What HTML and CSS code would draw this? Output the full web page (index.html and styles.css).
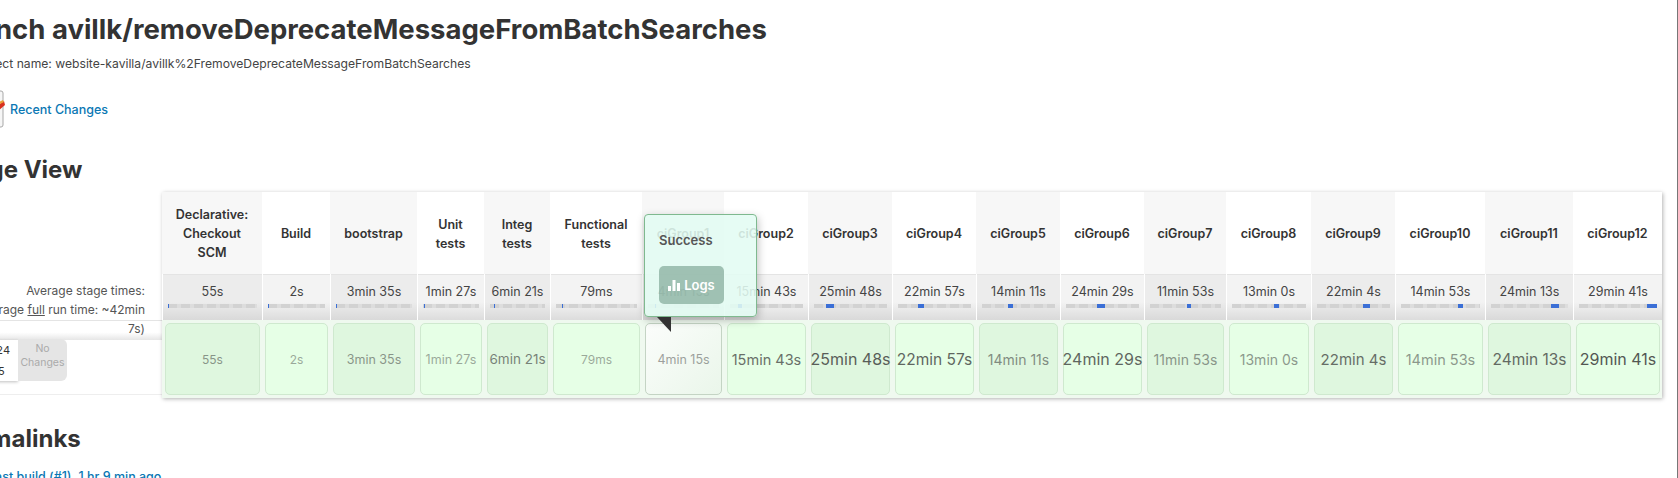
FILE: index.html
```html
<!DOCTYPE html>
<html lang="en">
<head>
    <meta charset="UTF-8">
    <title>Branch avillk/removeDeprecateMessageFromBatchSearches</title>
    <link rel="stylesheet" href="styles.css">
</head>
<body>
    <div class="page">
        <h1>Branch avillk/removeDeprecateMessageFromBatchSearches</h1>
        <p class="project-name">Full project name: website-kavilla/avillk%2FremoveDeprecateMessageFromBatchSearches</p>

        <div class="changes-row">
            <svg class="changes-icon" width="32" height="38" viewBox="0 0 32 38">
                <rect x="2" y="1" width="28" height="36" rx="2" fill="#f6f6f6" stroke="#a8a8a8"/>
                <path d="M7 8h18M7 14h18M7 20h18" stroke="#c8c8c8"/>
                <path d="M25 15l6-4 1 4-6 5z" fill="#d9301f"/>
                <path d="M26 12l4-2 1 2-4 2z" fill="#e9a23b"/>
            </svg>
            <a class="link" href="#">Recent Changes</a>
        </div>

        <h2 class="stage-title">Stage View</h2>

        <div class="stage-view">
            <div class="left-col">
                <div class="avg-label">
                    Average stage times:<br>
                    (Average <u>full</u> run time: ~42min 7s)
                </div>
                <div class="build-band"></div>
                <div class="build-row">
                    <div class="build-date">
                        <span>Jun 24</span>
                        <span>12:15</span>
                    </div>
                    <div class="no-changes">No Changes</div>
                </div>
            </div>

            <div class="stage-table">
                <div class="stage odd">
                    <div class="stage-head">Declarative: Checkout SCM</div>
                    <div class="stage-avg">55s<div class="track"><div class="bar" style="left:0;width:1%"></div></div></div>
                    <div class="stage-body"><div class="cell"><span style="font-size:12px;opacity:.5">55s</span></div></div>
                </div>
                <div class="stage">
                    <div class="stage-head">Build</div>
                    <div class="stage-avg">2s<div class="track"><div class="bar" style="left:0;width:1%"></div></div></div>
                    <div class="stage-body"><div class="cell"><span style="font-size:12px;opacity:.42">2s</span></div></div>
                </div>
                <div class="stage odd">
                    <div class="stage-head">bootstrap</div>
                    <div class="stage-avg">3min 35s<div class="track"><div class="bar" style="left:0;width:1%"></div></div></div>
                    <div class="stage-body"><div class="cell"><span style="font-size:12.5px;opacity:.5">3min 35s</span></div></div>
                </div>
                <div class="stage">
                    <div class="stage-head">Unit tests</div>
                    <div class="stage-avg">1min 27s<div class="track"><div class="bar" style="left:1%;width:1.5%"></div></div></div>
                    <div class="stage-body"><div class="cell"><span style="font-size:12.5px;opacity:.42">1min 27s</span></div></div>
                </div>
                <div class="stage odd">
                    <div class="stage-head">Integ tests</div>
                    <div class="stage-avg">6min 21s<div class="track"><div class="bar" style="left:7%;width:1.5%"></div></div></div>
                    <div class="stage-body"><div class="cell"><span style="font-size:13.5px;opacity:.6">6min 21s</span></div></div>
                </div>
                <div class="stage">
                    <div class="stage-head">Functional tests</div>
                    <div class="stage-avg">79ms<div class="track"><div class="bar" style="left:7.5%;width:1%"></div></div></div>
                    <div class="stage-body"><div class="cell"><span style="font-size:12px;opacity:.42">79ms</span></div></div>
                </div>
                <div class="stage odd hovered">
                    <div class="stage-head">ciGroup1</div>
                    <div class="stage-avg">4min 15s<div class="track"><div class="bar" style="left:10%;width:1%"></div></div></div>
                    <div class="stage-body"><div class="cell"><span style="font-size:12.5px;opacity:.45">4min 15s</span></div></div>
                </div>
                <div class="stage">
                    <div class="stage-head">ciGroup2</div>
                    <div class="stage-avg">15min 43s<div class="track"><div class="bar" style="left:11%;width:6%"></div></div></div>
                    <div class="stage-body"><div class="cell"><span style="font-size:14.5px;opacity:.7">15min 43s</span></div></div>
                </div>
                <div class="stage odd">
                    <div class="stage-head">ciGroup3</div>
                    <div class="stage-avg">25min 48s<div class="track"><div class="bar" style="left:17%;width:11%"></div></div></div>
                    <div class="stage-body"><div class="cell"><span style="font-size:16px;opacity:.78">25min 48s</span></div></div>
                </div>
                <div class="stage">
                    <div class="stage-head">ciGroup4</div>
                    <div class="stage-avg">22min 57s<div class="track"><div class="bar" style="left:28%;width:8%"></div></div></div>
                    <div class="stage-body"><div class="cell"><span style="font-size:15.5px;opacity:.75">22min 57s</span></div></div>
                </div>
                <div class="stage odd">
                    <div class="stage-head">ciGroup5</div>
                    <div class="stage-avg">14min 11s<div class="track"><div class="bar" style="left:36%;width:7%"></div></div></div>
                    <div class="stage-body"><div class="cell"><span style="font-size:14px;opacity:.55">14min 11s</span></div></div>
                </div>
                <div class="stage">
                    <div class="stage-head">ciGroup6</div>
                    <div class="stage-avg">24min 29s<div class="track"><div class="bar" style="left:43%;width:10%"></div></div></div>
                    <div class="stage-body"><div class="cell"><span style="font-size:16px;opacity:.75">24min 29s</span></div></div>
                </div>
                <div class="stage odd">
                    <div class="stage-head">ciGroup7</div>
                    <div class="stage-avg">11min 53s<div class="track"><div class="bar" style="left:52%;width:6%"></div></div></div>
                    <div class="stage-body"><div class="cell"><span style="font-size:14px;opacity:.5">11min 53s</span></div></div>
                </div>
                <div class="stage">
                    <div class="stage-head">ciGroup8</div>
                    <div class="stage-avg">13min 0s<div class="track"><div class="bar" style="left:57%;width:6%"></div></div></div>
                    <div class="stage-body"><div class="cell"><span style="font-size:14px;opacity:.5">13min 0s</span></div></div>
                </div>
                <div class="stage odd">
                    <div class="stage-head">ciGroup9</div>
                    <div class="stage-avg">22min 4s<div class="track"><div class="bar" style="left:62.5%;width:10%"></div></div></div>
                    <div class="stage-body"><div class="cell"><span style="font-size:15px;opacity:.7">22min 4s</span></div></div>
                </div>
                <div class="stage">
                    <div class="stage-head">ciGroup10</div>
                    <div class="stage-avg">14min 53s<div class="track"><div class="bar" style="left:72%;width:6%"></div></div></div>
                    <div class="stage-body"><div class="cell"><span style="font-size:14.5px;opacity:.5">14min 53s</span></div></div>
                </div>
                <div class="stage odd">
                    <div class="stage-head">ciGroup11</div>
                    <div class="stage-avg">24min 13s<div class="track"><div class="bar" style="left:78%;width:10.5%"></div></div></div>
                    <div class="stage-body"><div class="cell"><span style="font-size:15.5px;opacity:.72">24min 13s</span></div></div>
                </div>
                <div class="stage">
                    <div class="stage-head">ciGroup12</div>
                    <div class="stage-avg">29min 41s<div class="track"><div class="bar" style="left:87%;width:13%"></div></div></div>
                    <div class="stage-body"><div class="cell"><span style="font-size:16px;opacity:.82">29min 41s</span></div></div>
                </div>

                <div class="popover">
                    <div class="popover-title">Success</div>
                    <div class="logs-btn">
                        <svg width="12" height="12" viewBox="0 0 12 12"><path d="M0 7h3v5H0zM4.5 1h3v11h-3zM9 4h3v8H9z" fill="#fff"/></svg>
                        Logs
                    </div>
                    <div class="popover-arrow"></div>
                </div>
            </div>
        </div>

        <h2 class="permalinks-title">Permalinks</h2>
        <a class="link last-build" href="#">Last build (#1), 1 hr 9 min ago</a>
    </div>
</body>
</html>
```

FILE: styles.css
```css
html, body {
    margin: 0;
    height: 478px;
    overflow: hidden;
    background: #fff;
}
body {
    font-family: Inter, "Liberation Sans", sans-serif;
    font-size: 12px;
    color: #333;
    border-right: 1px solid #777;
}
.page {
    margin-left: -50px;
    width: 1724px;
}
h1 {
    margin: 0;
    padding-top: 13px;
    font-size: 27.5px;
    line-height: 32px;
    font-weight: 700;
}
.project-name {
    margin: 11px 0 0;
    font-size: 12.15px;
    line-height: 16px;
    color: #444;
}
.changes-row {
    display: flex;
    align-items: center;
    margin-top: 18px;
    margin-left: 23px;
    gap: 5px;
}
.link {
    color: #0b78b4;
    font-size: 12.5px;
    font-weight: 500;
    text-decoration: none;
}
.stage-title {
    margin: 27px 0 0;
    font-size: 24px;
    line-height: 30px;
    font-weight: 700;
}
.stage-view {
    display: flex;
    align-items: flex-start;
    margin-top: 7px;
}

/* left side: labels and build row */
.left-col {
    width: 212px;
    flex: none;
}
.avg-label {
    height: 128px;
    box-sizing: border-box;
    padding: 89px 17px 0 8px;
    text-align: right;
    line-height: 19px;
    color: #555;
}
.build-band {
    height: 20px;
    box-sizing: border-box;
    border-top: 1px solid #e4e4e4;
    background: linear-gradient(#fff 60%, #e6e6e6);
}
.build-row {
    display: flex;
    height: 54px;
    border-bottom: 1px solid #eee;
}
.build-date {
    display: flex;
    flex-direction: column;
    justify-content: space-around;
    align-items: center;
    margin-left: 12px;
    width: 56px;
    height: 41px;
    box-sizing: border-box;
    padding-left: 4px;
    font-size: 11px;
    background: #fff;
    box-shadow: 0 1px 3px rgba(0,0,0,.25);
}
.no-changes {
    width: 49px;
    height: 42px;
    margin-top: -1px;
    padding: 3px 2px;
    box-sizing: border-box;
    text-align: center;
    font-size: 10.5px;
    line-height: 14px;
    color: #aaa;
    background: #e5e5e5;
    border-radius: 0 6px 6px 0;
}

/* stage table */
.stage-table {
    position: relative;
    display: grid;
    grid-template-columns: 100px 68px 87px 67px 66px 92px 82px 84px 84px 84px 84px 84px 82px 85px 84px 90px 88px 89px;
    box-shadow: 1px 1px 4px rgba(0,0,0,.3);
}
.stage {
    display: flex;
    flex-direction: column;
    min-width: 0;
}
.stage-head {
    height: 82px;
    display: flex;
    align-items: center;
    justify-content: center;
    box-sizing: border-box;
    padding: 1px 8px 0;
    text-align: center;
    font-weight: 600;
    font-size: 12.5px;
    line-height: 19px;
    background: #fff;
}
.stage.odd .stage-head {
    background: #f7f7f7;
}
.stage-avg {
    height: 46px;
    box-sizing: border-box;
    padding-top: 9px;
    margin-left: 1px;
    text-align: center;
    font-size: 12.5px;
    line-height: 15px;
    color: #444;
    border-top: 1px solid #e4e4e4;
    background: linear-gradient(#f3f3f3 60%, #dcdcdc);
}
.stage.odd .stage-avg {
    background: linear-gradient(#ececec 60%, #d9d9d9);
}
.track {
    position: relative;
    height: 4px;
    margin: 5px 5px 0;
    background: repeating-linear-gradient(90deg, #d2d2d2 0 9px, #dddddd 9px 13px);
}
.bar {
    position: absolute;
    top: 0;
    height: 100%;
    min-width: 1px;
    background: #3b6fd6;
}
.stage-body {
    height: 78px;
    box-sizing: border-box;
    padding: 3px 2px 3px 3px;
    background: #eff9ef;
}
.cell {
    height: 100%;
    box-sizing: border-box;
    display: flex;
    align-items: center;
    justify-content: center;
    white-space: nowrap;
    border: 1px solid #cfe9cf;
    border-radius: 5px;
    background: #e6ffe6;
    color: #333;
}
.stage.odd .cell {
    background: #dff7df;
}
.stage.hovered .cell {
    border-color: #c4d4c4;
    background: linear-gradient(135deg, #fbfdfb, #eaf6ea);
}

/* hovered stage popover */
.popover {
    position: absolute;
    left: 482px;
    top: 22px;
    width: 113px;
    height: 103px;
    box-sizing: border-box;
    padding: 17px 14px 0;
    background: rgba(226, 252, 243, .88);
    border: 1px solid #7fb98f;
    border-radius: 4px;
    box-shadow: 1px 3px 8px rgba(0,0,0,.25);
}
.popover-title {
    font-weight: 600;
    font-size: 13px;
    line-height: 16px;
    color: #555;
}
.logs-btn {
    display: flex;
    align-items: center;
    justify-content: center;
    gap: 4px;
    width: 65px;
    height: 38px;
    margin-top: 18px;
    font-weight: 600;
    font-size: 13px;
    color: #fff;
    background: rgba(90, 135, 115, .5);
    border-radius: 5px;
}
.popover-arrow {
    position: absolute;
    left: 12px;
    top: 102px;
    width: 0;
    height: 0;
    border-top: 15px solid #333;
    border-left: 14px solid transparent;
}

.permalinks-title {
    margin: 26px 0 0;
    font-size: 24px;
    line-height: 30px;
    font-weight: 700;
}
.last-build {
    display: block;
    margin: 15px 0 0 38px;
    font-size: 12.5px;
}
```
